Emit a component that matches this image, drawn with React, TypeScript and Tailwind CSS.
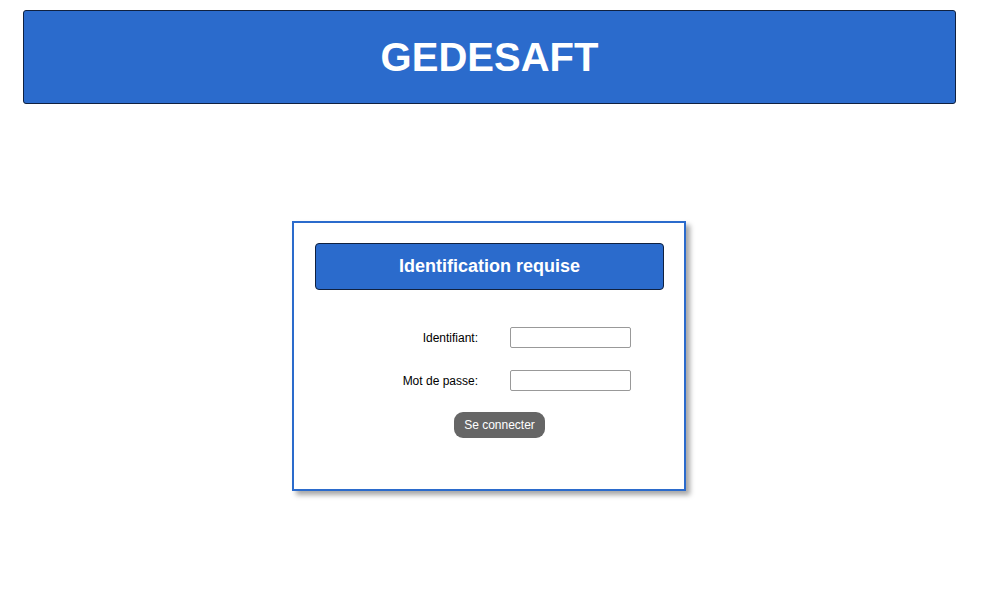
export default function App() {
  return (
    <div className="min-h-screen bg-white pt-[10px] font-['Liberation_Sans',Arial,sans-serif] text-black">
      <header className="ml-[23px] flex h-[94px] w-[933px] items-center justify-center rounded-[3px] border border-[#10213f] bg-[#2b6bcc]">
        <h1 className="text-[40px] font-bold leading-none text-white">GEDESAFT</h1>
      </header>

      <div className="ml-[292px] mt-[117px] h-[270px] w-[394px] border-2 border-[#2b6bcc] bg-white px-[21px] pt-[20px] shadow-[4px_4px_5px_rgba(0,0,0,0.35)]">
        <div className="flex h-[47px] w-[349px] items-center justify-center rounded-[4px] border border-[#10213f] bg-[#2b6bcc]">
          <h2 className="text-[18px] font-bold text-white">Identification requise</h2>
        </div>

        <form className="mt-[37px] flex flex-col" onSubmit={(e) => e.preventDefault()}>
          <div className="flex h-[21px] items-center">
            <label className="w-[163px] text-right text-[12px]">Identifiant:</label>
            <input
              type="text"
              className="ml-[32px] h-[21px] w-[121px] rounded-[2px] border border-[#999] bg-white px-1 text-[12px]"
            />
          </div>
          <div className="mt-[22px] flex h-[21px] items-center">
            <label className="w-[163px] text-right text-[12px]">Mot de passe:</label>
            <input
              type="password"
              className="ml-[32px] h-[21px] w-[121px] rounded-[2px] border border-[#999] bg-white px-1 text-[12px]"
            />
          </div>
          <div className="mt-[21px]">
            <button
              type="submit"
              className="ml-[139px] h-[26px] w-[91px] rounded-[9px] bg-[#666] text-[12px] text-white"
            >
              Se connecter
            </button>
          </div>
        </form>
      </div>
    </div>
  );
}
